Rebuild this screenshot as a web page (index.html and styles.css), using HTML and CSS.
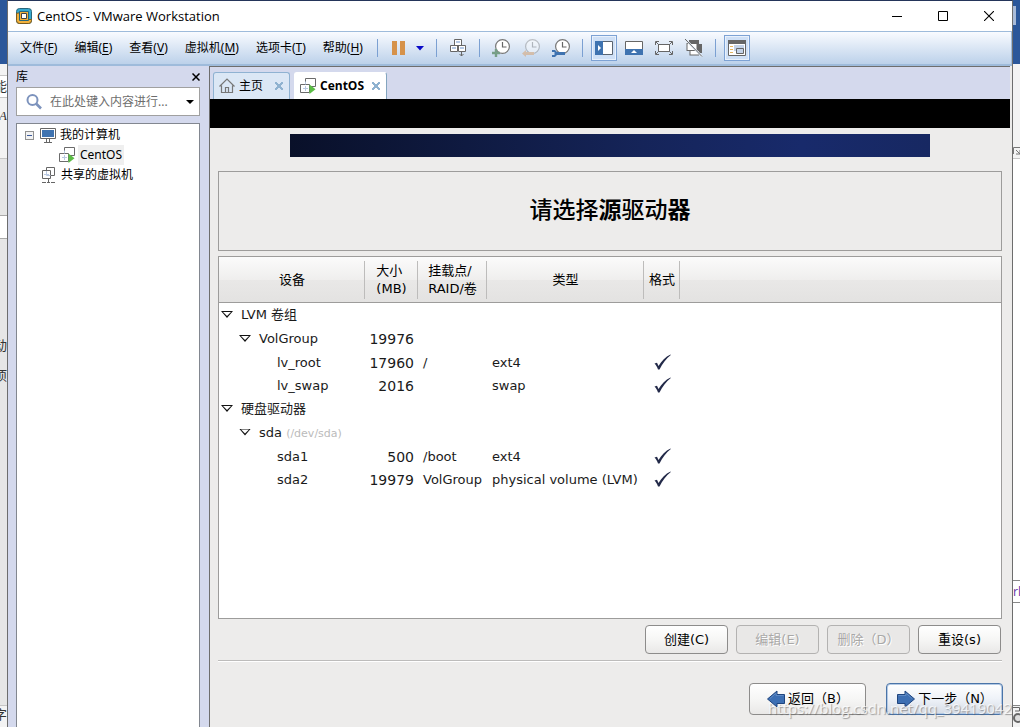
FILE: index.html
```
<!DOCTYPE html>
<html lang="zh-CN">
<head>
<meta charset="utf-8">
<title>CentOS - VMware Workstation</title>
<link rel="stylesheet" href="styles.css">
</head>
<body>
<svg class="defs" aria-hidden="true">
  <symbol id="vm" viewBox="0 0 16 16">
    <path d="M5.500 .5h10v8h-10z" fill="#fff" stroke="#6b6b6b"/>
    <path d="M.5 6.500h9v8h-9z" fill="#fff" stroke="#6b6b6b"/>
    <path d="M5.500 6.500V3.500M3 10.500h5M5.500 8v5" fill="none" stroke="#b9c9e2"/>
    <path d="M9.500 6.500l6 4.800-6 4.700z" fill="#5bbd45"/>
  </symbol>
  <symbol id="clock" viewBox="0 0 18 18">
    <circle cx="10.500" cy="7.500" r="6.900" fill="#fff" stroke="#777" stroke-width="1.200"/>
    <path d="M10.500 3v5h4" fill="none" stroke="#666" stroke-width="1.200"/>
  </symbol>
  <symbol id="check" viewBox="0 0 18 18">
    <path d="M.5 9.500l2.500-.8 1.500 3.300C7.500 7 11.500 2.500 16.500 .5l.3.400C12 4.500 8.500 9.500 5.500 15.500H4C3.300 13 2 11 .5 9.500z" fill="#232a49"/>
  </symbol>
  <symbol id="arrow" viewBox="0 0 20 18">
    <path d="M1.500 4.500h7.500v-3.500l9.500 8-9.500 8v-3.500h-7.500z" fill="#3d6fb3" stroke="#1f457f"/>
    <path d="M2.500 5.500h7.500v-2.300l6 5.300" fill="none" stroke="#5f8ac4"/>
  </symbol>
</svg>
<div class="desktop">
  <div class="strip strip-left" aria-hidden="true">
    <div class="ribbon"></div>
    <div class="band tabs-band"></div>
    <div class="band field"><span>能</span></div>
    <div class="band tools"><i>A</i></div>
    <div class="band gray"></div>
    <div class="band cell"></div>
    <div class="band pane"><span>动</span><span>项</span></div>
    <div class="band status"><span>字</span></div>
  </div>

  <div class="window">
    <header class="titlebar">
      <svg class="logo" viewBox="0 0 16 16">
        <rect x=".5" y=".5" width="15" height="15" rx="3" fill="#35a8cf" stroke="#27667c"/>
        <path d="M.5 5.500v7a3 3 0 0 0 3 3h9a3 3 0 0 0 3-3v-1h-4v.5h-7v-7h-2.500z" fill="#f2b13c" stroke="#7a5a1c"/>
        <path d="M3.500 3.500h9v9h-9z" fill="#f2b13c" stroke="#27667c"/>
        <path d="M5.500 5.500h5v5h-5z" fill="#fff" stroke="#444"/>
      </svg>
      <h1>CentOS - VMware Workstation</h1>
      <div class="controls">
        <button aria-label="最小化"><svg viewBox="0 0 10 10"><path d="M0 5.500h10" stroke="#000"/></svg></button>
        <button aria-label="最大化"><svg viewBox="0 0 10 10"><path d="M.5 .5h9v9h-9z" fill="none" stroke="#000"/></svg></button>
        <button aria-label="关闭"><svg viewBox="0 0 10 10"><path d="M0 0l10 10M10 0L0 10" stroke="#000" stroke-width="1.100"/></svg></button>
      </div>
    </header>

    <div class="menubar">
      <nav class="menus">
        <button>文件(<u>F</u>)</button><button>编辑(<u>E</u>)</button><button>查看(<u>V</u>)</button><button>虚拟机(<u>M</u>)</button><button>选项卡(<u>T</u>)</button><button>帮助(<u>H</u>)</button>
      </nav>
      <div class="toolbar">
        <span class="sep"></span>
        <div class="split">
          <button class="tool" aria-label="挂起"><svg viewBox="0 0 18 18"><path d="M2 2h5v14h-5zM10 2h5v14h-5z" fill="#d6924a"/></svg></button>
          <button class="tool caret" aria-label="电源选项"><svg viewBox="0 0 8 8"><path d="M0 2h8L4 6.500z" fill="#0a0ac8"/></svg></button>
        </div>
        <span class="sep"></span>
        <button class="tool" aria-label="发送 Ctrl+Alt+Del"><svg viewBox="0 0 18 18"><g fill="#fff" stroke="#666"><path d="M5.500 .5h7v6h-7zM1.500 6.500h7v6h-7zM9.500 6.500h7v6h-7z"/></g><path d="M7 3h4M3 9h4M11 9h4" stroke="#b4c8e4" stroke-width="2"/><path d="M12.500 13v4M10.500 15l2 2 2-2" fill="none" stroke="#666"/></svg></button>
        <span class="sep"></span>
        <button class="tool" aria-label="拍摄快照"><svg viewBox="0 0 18 18"><use href="#clock"/><path d="M4 10v8M0 14h8" stroke="#769f87" stroke-width="2.400"/></svg></button>
        <button class="tool" aria-label="恢复快照" disabled><svg viewBox="0 0 18 18"><use href="#clock"/><path d="M0 14.500l4-3.500v2h8v3H4v2z" fill="#d98d45"/></svg></button>
        <button class="tool" aria-label="管理快照"><svg viewBox="0 0 18 18"><use href="#clock"/><path d="M0 11h3l2 2h8v3H5l-2 2H0v-2h2.500v-3H0z" fill="#3f73b0"/></svg></button>
        <span class="sep"></span>
        <button class="tool on" aria-label="库"><svg viewBox="0 0 18 18"><path d="M.5 2.500h17v13H.5z" fill="#fff" stroke="#5a6470"/><path d="M0 2h8v14H0z" fill="#3f73b0"/><path d="M3 6l3 3-3 3z" fill="#fff"/></svg></button>
        <button class="tool" aria-label="缩略图"><svg viewBox="0 0 18 18"><path d="M.5 2.500h17v13H.5z" fill="#fff" stroke="#666"/><path d="M0 10h18v6H0z" fill="#3f73b0"/><path d="M6 14l3-3 3 3z" fill="#fff"/></svg></button>
        <button class="tool" aria-label="全屏"><svg viewBox="0 0 18 18"><path d="M3.500 5.500h11v7h-11z" fill="#fff" stroke="#666"/><path d="M.5 6V2.500H4M14 2.500h3.500V6M17.500 12v3.500H14M4 15.500H.5V12M1 3l3 3M17 3l-3 3M17 15l-3-3M1 15l3-3" fill="none" stroke="#666"/></svg></button>
        <button class="tool" aria-label="Unity"><svg viewBox="0 0 18 18"><path d="M4 1h10v4h3v9h-3v2.500H4.500V12H1.500V4h2.500z" fill="#666"/><path d="M2.500 5h9v6h-9zM5.500 12h8v3.500h-8z" fill="#fff"/><path d="M0 0l17 17.500" stroke="#e6eef8" stroke-width="2"/><path d="M0 0l17 17.500" stroke="#666"/></svg></button>
        <span class="sep"></span>
        <button class="tool on" aria-label="控制台视图"><svg viewBox="0 0 18 18"><path d="M.5 1.500h17v15H.5z" fill="#fff" stroke="#666"/><path d="M0 1h18v4H0z" fill="#666"/><path d="M2 7.500h3M2 10.500h3M2 13.500h3" stroke="#e4b562"/><path d="M6 6h10v6H6z" fill="#c4d3e8"/><path d="M8.500 9.500h7v5h-7z" fill="#c4d3e8" stroke="#666"/></svg></button>
      </div>
    </div>

    <div class="main">
      <aside class="library">
        <div class="library-head"><h2>库</h2><button aria-label="关闭库"><svg viewBox="0 0 8 8"><path d="M.5 .5l7 7M7.500 .5l-7 7" stroke="#000" stroke-width="1.500"/></svg></button></div>
        <div class="search">
          <svg viewBox="0 0 16 16"><circle cx="6.500" cy="6" r="5" fill="none" stroke="#7d93bd" stroke-width="2"/><path d="M10 9.500l5 5" stroke="#7d93bd" stroke-width="2.600"/></svg>
          <input type="text" aria-label="搜索" placeholder="在此处键入内容进行...">
          <button aria-label="搜索选项"><svg viewBox="0 0 8 8"><path d="M0 2h8L4 6z" fill="#000"/></svg></button>
        </div>
        <div class="tree">
          <div class="node"><button class="toggle" aria-label="折叠"></button><svg viewBox="0 0 16 16"><path d="M.5 1.500h15v10H.5z" fill="#fff" stroke="#666"/><path d="M2 3h12v7H2z" fill="#3f73b0"/><path d="M6.500 12v3M9.500 12v3M4 15.500h8" stroke="#666"/></svg><span>我的计算机</span></div>
          <div class="node child"><svg viewBox="0 0 16 16"><use href="#vm"/></svg><span class="selected">CentOS</span></div>
          <div class="node shared"><svg viewBox="0 0 16 16"><path d="M5.500 .5h8v8h-8z" fill="#fff" stroke="#666"/><path d="M1.500 3.500h8v8h-8z" fill="#fff" stroke="#666"/><path d="M5.500 4v4.500h4M3 7.500h5" fill="none" stroke="#b9c9e2"/><path d="M7.500 12v3M1 15.500h4M6 15.500h3M10 15.500h4" stroke="#666"/></svg><span>共享的虚拟机</span></div>
        </div>
      </aside>

      <section class="workspace">
        <div class="tabs">
          <div class="tab"><svg viewBox="0 0 16 16"><path d="M2.500 7.500v7h11v-7M.5 8.500L8 1l7.500 7.500M6.500 14.500v-5h3v5" fill="none" stroke="#777" stroke-width="1.200"/></svg><button>主页</button><button class="close" aria-label="关闭主页"></button></div>
          <div class="tab active"><svg viewBox="0 0 16 16"><use href="#vm"/></svg><button>CentOS</button><button class="close" aria-label="关闭 CentOS"></button></div>
        </div>
        <div class="blank"></div>
        <div class="guest">
          <div class="banner"></div>
          <h2 class="heading">请选择<b>源</b>驱动<b>器</b></h2>
          <div class="listing">
            <table>
              <colgroup><col class="c-dev"><col class="c-size"><col class="c-mount"><col class="c-type"><col class="c-format"><col></colgroup>
              <thead><tr><th>设备</th><th><div>大小<br>(MB)</div></th><th><div>挂载点/<br>RAID/卷</div></th><th>类型</th><th>格式</th><td></td></tr></thead>
              <tbody>
                <tr class="group"><td><button class="expander" aria-label="折叠"></button>LVM 卷组</td><td></td><td></td><td></td><td></td><td></td></tr>
                <tr class="group"><td class="l1"><button class="expander" aria-label="折叠"></button>VolGroup</td><td class="num">19976</td><td></td><td></td><td></td><td></td></tr>
                <tr><td class="l2">lv_root</td><td class="num">17960</td><td>/</td><td>ext4</td><td class="mark"><svg role="img" aria-label="是"><use href="#check"/></svg></td><td></td></tr>
                <tr><td class="l2">lv_swap</td><td class="num">2016</td><td></td><td>swap</td><td class="mark"><svg role="img" aria-label="是"><use href="#check"/></svg></td><td></td></tr>
                <tr class="group"><td><button class="expander" aria-label="折叠"></button>硬盘驱动器</td><td></td><td></td><td></td><td></td><td></td></tr>
                <tr class="group"><td class="l1"><button class="expander" aria-label="折叠"></button>sda <small>(/dev/sda)</small></td><td></td><td></td><td></td><td></td><td></td></tr>
                <tr><td class="l2">sda1</td><td class="num">500</td><td>/boot</td><td>ext4</td><td class="mark"><svg role="img" aria-label="是"><use href="#check"/></svg></td><td></td></tr>
                <tr><td class="l2">sda2</td><td class="num">19979</td><td>VolGroup</td><td>physical volume (LVM)</td><td class="mark"><svg role="img" aria-label="是"><use href="#check"/></svg></td><td></td></tr>
              </tbody>
            </table>
          </div>
          <div class="actions">
            <button class="btn">创建(C)</button>
            <button class="btn" disabled>编辑(E)</button>
            <button class="btn" disabled>删除（D）</button>
            <button class="btn">重设(s)</button>
          </div>
          <div class="nav">
            <button class="btn wide"><svg class="back"><use href="#arrow"/></svg>返回（B）</button>
            <button class="btn wide primary"><svg><use href="#arrow"/></svg>下一步（N）</button>
          </div>
        </div>
      </section>
    </div>
  </div>

  <div class="strip strip-right" aria-hidden="true">
    <div class="ribbon"><span class="chip"></span></div>
    <div class="band tools"><svg viewBox="0 0 7 8"><path d="M.5 7V.5H7M3 3l4 4M7 3v4H3" fill="none" stroke="#777"/></svg></div>
    <div class="band page"></div>
    <div class="band link">rl</div>
    <div class="band page rest"></div>
    <div class="band status"><svg viewBox="0 0 7 18"><path d="M0 1.500h6.500V5H2" fill="none" stroke="#666"/><circle cx="5" cy="12" r="4" fill="#ddd" stroke="#666" stroke-width="2"/></svg></div>
  </div>
  <div class="watermark">https://blog.csdn.net/qq_39419042</div>
</div>
</body>
</html>
```
FILE: styles.css
```
* { box-sizing: border-box; }
body {
  margin: 0;
  font: 12px/16px "Noto Sans", "Noto Sans CJK SC", sans-serif;
  color: #000;
  background: #fff;
}
button { padding: 0; border: 0; background: none; font: inherit; color: inherit; }
h1, h2 { margin: 0; font: inherit; }
svg { display: block; flex: none; }
.defs { display: none; }

.desktop {
  position: relative;
  display: grid;
  grid-template-columns: 7px 1fr 7px;
  min-height: 100vh;
  overflow: hidden;
}

/* Document window behind */
.strip { display: flex; flex-direction: column; overflow: hidden; color: #333; }
.ribbon { height: 64px; background: #2b579a; }
.band { flex: none; overflow: hidden; border-bottom: 1px solid #c6c6c6; background: #f3f3f3; }
.strip span, .strip i { display: flex; justify-content: flex-end; font-size: 13px; }
.tabs-band { height: 12px; }
.field { height: 22px; padding-top: 2px; background: #fff; }
.strip-left .tools { height: 61px; padding-top: 10px; font-family: "Liberation Serif", serif; }
.gray { height: 57px; background: #e6e6e6; border-color: #aaa; }
.cell { height: 23px; background: #fff; border-color: #aaa; }
.strip .pane { flex: 1; background: #e6e6e6; padding-top: 98px; }
.pane span + span { margin-top: 14px; }
.strip .status { height: 21px; border: 0; }
.strip-right .ribbon { padding-top: 6px; }
.strip-right .chip { width: 3px; height: 19px; background: #a9bbd8; }
.strip-right .tools { height: 95px; padding-top: 83px; }
.strip-right .tools svg { width: 7px; height: 8px; }
.page { height: 422px; background: #fff; border-color: #888; }
.link { height: 22px; background: #fff; border-color: #888; color: #6a3da8; line-height: 21px; }
.strip .rest { flex: 1; }
.strip-right .status svg { width: 7px; height: 18px; }

/* Application window */
.window {
  display: flex;
  flex-direction: column;
  min-width: 0;
  border: solid #6d6d6d;
  border-width: 1px 1px 0;
  border-top-color: #24355a;
  background: #d4d9ed;
}
.titlebar { display: flex; align-items: center; height: 30px; padding-left: 8px; background: #fff; }
.logo { width: 16px; height: 16px; }
.titlebar h1 { flex: 1; margin-left: 5px; font: 13px/16px "Open Sans", sans-serif; }
.controls { display: flex; }
.controls button { display: grid; place-items: center; width: 46px; height: 29px; }
.controls svg { width: 10px; height: 10px; }

.menubar {
  display: flex;
  align-items: center;
  height: 35px;
  border: 1px solid #9ebbdb;
  border-width: 1px 1px 2px 0;
  background: linear-gradient(#f9fbff, #bcd1ea);
}
.menus { display: flex; gap: 17px; padding-left: 12px; white-space: nowrap; }
.menus u { text-underline-offset: 2px; }
.toolbar { display: flex; align-items: center; gap: 4px; margin-left: 10px; }
.sep { width: 1px; height: 18px; margin: 0 4px; background: #7ba0d2; }
.split { display: flex; }
.tool { display: grid; place-items: center; width: 26px; height: 26px; }
.tool svg { width: 18px; height: 18px; }
.tool:disabled { opacity: .4; }
.caret { width: 16px; }
.caret svg { width: 8px; height: 8px; }
.on { border: 1px solid #7da2d4; background: #cfe0f6; box-shadow: inset 0 0 0 1px #e9f1fc; }

.main { flex: 1; display: grid; grid-template-columns: 201px 1fr; }
.library { display: flex; flex-direction: column; padding: 0 9px 0 8px; }
.library-head { display: flex; justify-content: space-between; align-items: center; height: 21px; }
.library-head svg { width: 8px; height: 8px; }
.search {
  display: flex;
  align-items: center;
  height: 29px;
  padding: 0 5px 0 9px;
  border: 1px solid #a0a0a0;
  background: #fff;
}
.search > svg { width: 16px; height: 16px; }
.search input { flex: 1; min-width: 0; margin-left: 8px; padding: 0; border: 0; outline: 0; font: inherit; }
.search input::placeholder { color: #6d6d6d; }
.search button svg { width: 8px; height: 8px; }
.tree { flex: 1; margin-top: 7px; padding-top: 1px; border: 1px solid #828790; border-bottom: 0; background: #fff; }
.node { display: flex; align-items: center; height: 20px; padding-left: 8px; }
.node svg { width: 16px; height: 16px; margin-right: 4px; }
.node span { line-height: 20px; }
.node.child { padding-left: 42px; }
.node.child svg { margin-right: 3px; }
.node.shared { padding-left: 24px; }
.selected { padding: 0 2px; background: #efefef; }
.toggle {
  width: 9px;
  height: 9px;
  margin-right: 6px;
  border: 1px solid #919191;
  background: linear-gradient(#3c5a9a, #3c5a9a) center / 5px 1px no-repeat #f2f2f2;
}

.workspace {
  display: flex;
  flex-direction: column;
  min-width: 0;
  margin-right: 2px;
  border: solid #6e6e6e;
  border-width: 1px 0 0 1px;
  box-shadow: 2px 0 #ecebea;
}
.tabs { display: flex; gap: 4px; height: 32px; padding: 5px 3px 0; }
.tab {
  display: flex;
  align-items: center;
  padding: 0 6px 0 5px;
  border: 1px solid #8fb2d2;
  border-bottom: 0;
  border-radius: 3px 3px 0 0;
  background: #dbe7f5;
}
.tab > svg { width: 16px; height: 16px; margin-right: 4px; }
.tab.active { border-color: #fff #84a5bf #fff #fff; background: #fff; font-family: "Open Sans", sans-serif; font-weight: 700; }
.close {
  width: 8px;
  height: 8px;
  margin-left: 12px;
  background:
    linear-gradient(45deg, transparent 38%, #8fb2d0 38% 62%, transparent 62%),
    linear-gradient(-45deg, transparent 38%, #8fb2d0 38% 62%, transparent 62%);
}
.active .close { margin-left: 8px; }
.blank { height: 29px; background: #000; }

/* Installer inside the virtual machine */
.guest {
  flex: 1;
  display: flex;
  flex-direction: column;
  padding: 6px 8px 12px;
  background: #edeceb;
  font: 13px/18px "DejaVu Sans", "Noto Sans CJK SC", sans-serif;
}
.banner { height: 23px; margin: 0 72px; background: linear-gradient(90deg, #091029, #152459 55%, #182a6b 80%, #172862); }
.heading {
  display: grid;
  grid-auto-flow: column;
  place-content: center;
  height: 80px;
  margin-top: 14px;
  padding-bottom: 2px;
  border: 1px solid #9d9c9b;
  font-size: 23px;
  font-weight: 500;
}
.listing { flex: 1; margin-top: 5px; border: 1px solid #9d9c9b; background: #fff; color: #1a1a1a; }
table { width: 100%; table-layout: fixed; border-collapse: collapse; }
.c-dev { width: 146px; }
.c-size { width: 53px; }
.c-mount { width: 69px; }
.c-type { width: 157px; }
.c-format { width: 36px; }
thead tr { height: 46px; background: linear-gradient(#fbfbfb, #efeeed 50%, #e9e8e7 50%, #e3e2e1); box-shadow: inset 0 -1px #9d9c9b; }
th {
  padding: 0;
  font-weight: 400;
  color: #000;
  background: linear-gradient(#bdbcbb, #bdbcbb) right 4px / 1px 38px no-repeat;
}
th div { display: inline-block; text-align: left; white-space: nowrap; }
tbody tr { height: 23px; }
tbody tr.group { height: 24px; }
td { padding: 0 0 0 5px; line-height: 18px; white-space: nowrap; }
td:first-child { padding-left: 2px; }
td.l1:first-child { padding-left: 20px; }
td.l2:first-child { padding-left: 58px; }
td.num { padding: 0 4px 0 0; text-align: right; font-size: 14px; }
td.mark { padding-left: 10px; }
td.mark svg { width: 18px; height: 18px; }
td small { font-size: 11px; color: #bbb; }
.expander {
  width: 12px;
  height: 7px;
  margin-right: 8px;
  vertical-align: 1px;
  background: #111;
  clip-path: polygon(0 0, 100% 0, 50% 100%, 0 0, 2px 1px, 50% 5px, 10px 1px, 2px 1px);
}
.actions { display: flex; justify-content: flex-end; gap: 8px; padding: 6px 1px 6px 0; border-bottom: 1px solid #bdbcbb; box-shadow: 0 1px #fff; }
.btn {
  display: flex;
  align-items: center;
  justify-content: center;
  width: 83px;
  height: 29px;
  border: 1px solid #8d8c8b;
  border-radius: 4px;
  background: linear-gradient(#fff, #f6f6f5 50%, #e9e8e7);
  white-space: nowrap;
}
.btn:disabled { border-color: #b3b2b1; background: #e9e8e7; color: #a9a8a7; text-shadow: 1px 1px #fff; }
.nav { display: flex; justify-content: flex-end; gap: 20px; margin-right: -1px; padding-top: 22px; }
.wide { width: 117px; height: 32px; }
.wide svg { width: 20px; height: 18px; margin-right: 2px; }
.wide .back { transform: scaleX(-1); }
.primary { border-color: #4a74a8; background: linear-gradient(#fff, #eef2f8 50%, #d5dbe5); box-shadow: inset 0 0 0 1px #b3c9e4; }

.watermark {
  position: absolute;
  right: 8px;
  bottom: 10px;
  font: 15px/18px "Open Sans", sans-serif;
  color: rgba(255, 255, 255, .75);
  text-shadow: 1px 1px 1px rgba(90, 90, 90, .55);
  pointer-events: none;
}
```
